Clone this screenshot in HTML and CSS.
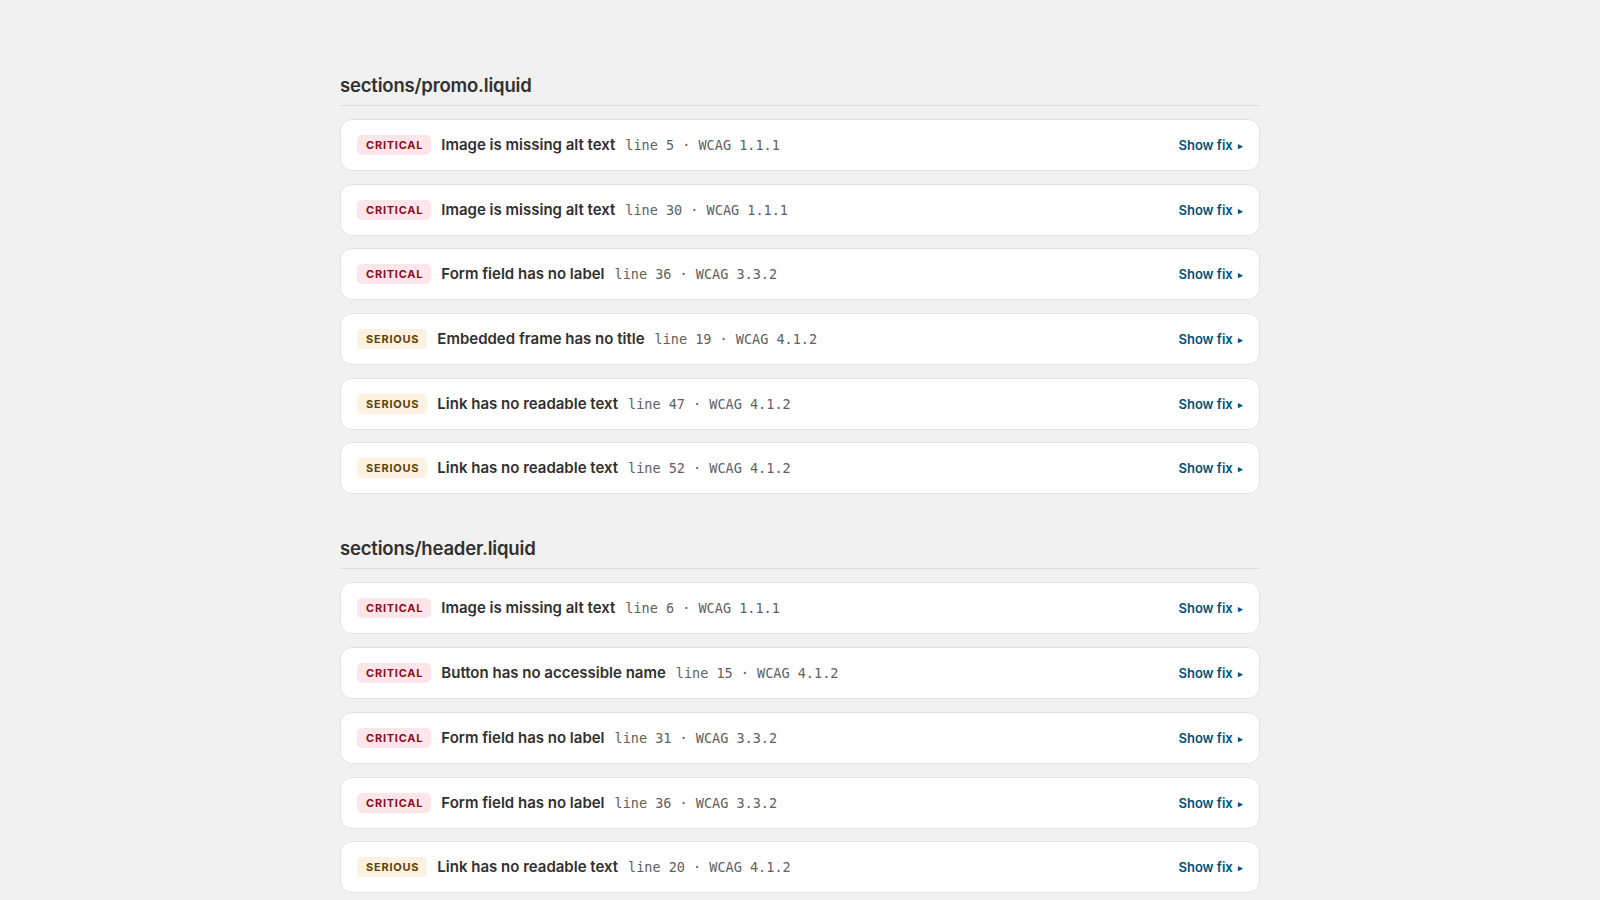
FILE: index.html
```html
<!DOCTYPE html>
<html lang="en">
<head>
<meta charset="utf-8">
<title>Accessibility report</title>
<link rel="stylesheet" href="styles.css">
</head>
<body>
<main class="report">
  <section class="file">
    <h2 class="file-name">sections/promo.liquid</h2>
    <ul class="issues">
      <li class="issue"><span class="badge critical">CRITICAL</span><span class="title">Image is missing alt text</span><span class="meta">line 5 · WCAG 1.1.1</span><button class="fix">Show fix <span class="caret">▸</span></button></li>
      <li class="issue"><span class="badge critical">CRITICAL</span><span class="title">Image is missing alt text</span><span class="meta">line 30 · WCAG 1.1.1</span><button class="fix">Show fix <span class="caret">▸</span></button></li>
      <li class="issue"><span class="badge critical">CRITICAL</span><span class="title">Form field has no label</span><span class="meta">line 36 · WCAG 3.3.2</span><button class="fix">Show fix <span class="caret">▸</span></button></li>
      <li class="issue"><span class="badge serious">SERIOUS</span><span class="title">Embedded frame has no title</span><span class="meta">line 19 · WCAG 4.1.2</span><button class="fix">Show fix <span class="caret">▸</span></button></li>
      <li class="issue"><span class="badge serious">SERIOUS</span><span class="title">Link has no readable text</span><span class="meta">line 47 · WCAG 4.1.2</span><button class="fix">Show fix <span class="caret">▸</span></button></li>
      <li class="issue"><span class="badge serious">SERIOUS</span><span class="title">Link has no readable text</span><span class="meta">line 52 · WCAG 4.1.2</span><button class="fix">Show fix <span class="caret">▸</span></button></li>
    </ul>
  </section>
  <section class="file">
    <h2 class="file-name">sections/header.liquid</h2>
    <ul class="issues">
      <li class="issue"><span class="badge critical">CRITICAL</span><span class="title">Image is missing alt text</span><span class="meta">line 6 · WCAG 1.1.1</span><button class="fix">Show fix <span class="caret">▸</span></button></li>
      <li class="issue"><span class="badge critical">CRITICAL</span><span class="title">Button has no accessible name</span><span class="meta">line 15 · WCAG 4.1.2</span><button class="fix">Show fix <span class="caret">▸</span></button></li>
      <li class="issue"><span class="badge critical">CRITICAL</span><span class="title">Form field has no label</span><span class="meta">line 31 · WCAG 3.3.2</span><button class="fix">Show fix <span class="caret">▸</span></button></li>
      <li class="issue"><span class="badge critical">CRITICAL</span><span class="title">Form field has no label</span><span class="meta">line 36 · WCAG 3.3.2</span><button class="fix">Show fix <span class="caret">▸</span></button></li>
      <li class="issue"><span class="badge serious">SERIOUS</span><span class="title">Link has no readable text</span><span class="meta">line 20 · WCAG 4.1.2</span><button class="fix">Show fix <span class="caret">▸</span></button></li>
    </ul>
  </section>
</main>
</body>
</html>
```

FILE: styles.css
```css
html, body {
  margin: 0;
  padding: 0;
  background: #f1f1f1;
  color: #303030;
  font-family: Inter, "Noto Sans", "Liberation Sans", sans-serif;
}

.report {
  width: 920px;
  margin: 0 auto;
  padding-top: 71px;
  display: flex;
  flex-direction: column;
  gap: 40px;
}

.file-name {
  margin: 0;
  font-size: 18.5px;
  line-height: 28px;
  font-weight: 600;
  letter-spacing: -0.01em;
  padding-bottom: 6px;
  border-bottom: 1px solid #dedede;
}

.issues {
  list-style: none;
  margin: 13px 0 0;
  padding: 0;
  display: flex;
  flex-direction: column;
  gap: 12.7px;
}

.issue {
  display: flex;
  align-items: center;
  background: #ffffff;
  border: 1px solid #e3e3e3;
  border-radius: 12px;
  padding: 13px 16px;
  height: 24px;
  box-sizing: content-box;
}

.badge {
  font-size: 11px;
  line-height: 14px;
  font-weight: 700;
  letter-spacing: 0.07em;
  padding: 3px 8px 3px 9px;
  border-radius: 5px;
  margin-right: 10px;
}

.badge.critical {
  background: #fde6e9;
  color: #8e0b21;
}

.badge.serious {
  background: #fdf1e2;
  color: #5e4200;
}

.title {
  font-size: 15px;
  line-height: 24px;
  font-weight: 600;
  margin-right: 10px;
}

.meta {
  font-family: "DejaVu Sans Mono", "Liberation Mono", monospace;
  font-size: 13.5px;
  color: #616161;
}

.fix {
  margin-left: auto;
  background: none;
  border: 0;
  padding: 0;
  font-family: inherit;
  font-size: 13px;
  font-weight: 600;
  color: #00527c;
  cursor: pointer;
}

.caret {
  font-size: 9px;
  margin-left: 2px;
  vertical-align: 1px;
}
```
